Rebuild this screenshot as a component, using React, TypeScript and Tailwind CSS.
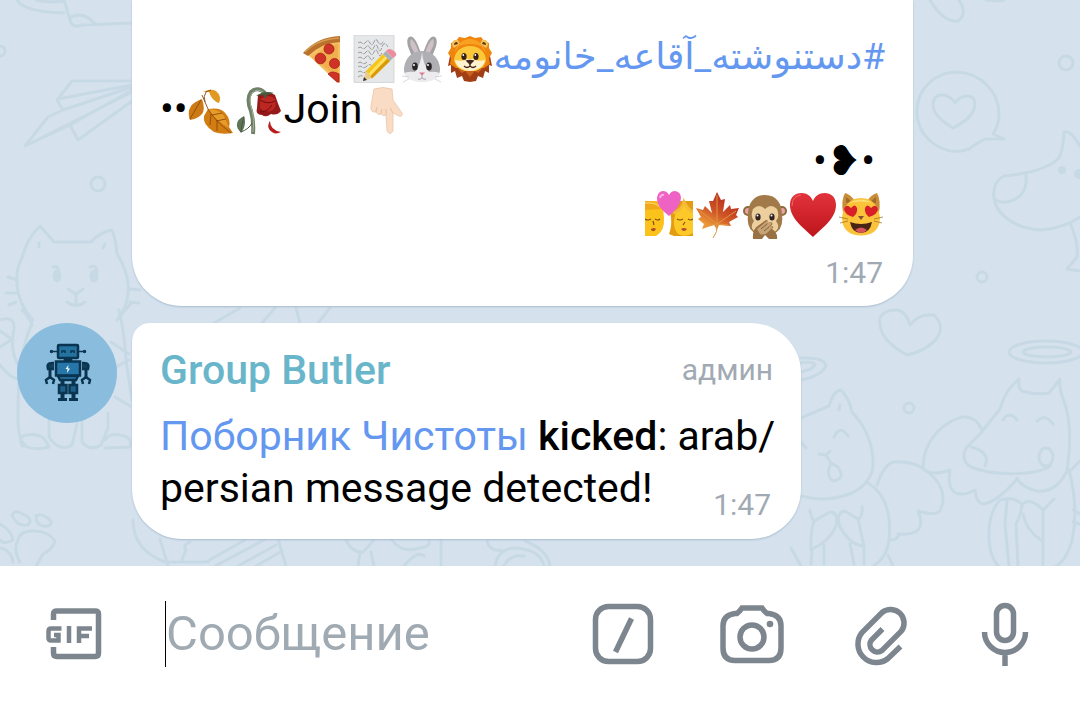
import type { ReactNode } from "react";

interface EmojiProps {
  label: string;
  children: ReactNode;
}

function Emoji({ label, children }: EmojiProps) {
  return (
    <svg
      role="img"
      aria-label={label}
      viewBox="0 0 48 48"
      className="h-12 w-12 shrink-0"
    >
      {children}
    </svg>
  );
}

const Pizza = () => (
  <Emoji label="pizza">
    <path d="M15 19Q28 7 48 5V48L45 47Z" fill="#f4c063" />
    <path d="M20 22Q32 12 46 9V43Z" fill="#f0b04e" />
    <path d="M11 18Q25 2 48 1V7Q29 8 16 21Z" fill="#b9712c" />
    <path d="M13 17Q26 4 47 3" fill="none" stroke="#d59a50" strokeWidth="1.5" />
    <g fill="#cf3226" stroke="#a92119" strokeWidth=".8">
      <circle cx="37" cy="14" r="5" />
      <circle cx="28.5" cy="23.5" r="5.3" />
      <circle cx="42.5" cy="28.5" r="5" />
      <path d="M36 39Q40 35 47 39V47L45 47Z" />
    </g>
  </Emoji>
);

const Memo = () => (
  <Emoji label="memo">
    <path d="M4 0H44V47.5H4Z" fill="#e6e7e8" stroke="#cfd1d3" strokeWidth=".8" />
    <path
      d="M8 8q2-2 4 0t4-1 4 1 4-1 4 0 6-1M8 13q2-2 4 0t4-1 4 1 4-1 4 1 4-1 6 0M8 18q2-2 4 0t4-1 4 1 4-1 4 1 4-1M8 23q2-2 4 0t4-1 4 1 4-1M8 28q2-2 4 0t5-1M8 32q2-2 4 0t5-1 5 0M8 37q2-2 4 0t5-1M8 42q2-2 5-1"
      fill="none"
      stroke="#84878b"
      strokeWidth=".8"
      strokeDasharray="5 1"
    />
    <path d="M13 46L16 36L22 43Z" fill="#eccb92" />
    <path d="M13 46L14 42L17 45Z" fill="#333" />
    <path d="M16 36L33 19L40 26L22 43.500Z" fill="#f5c518" />
    <path d="M18.500 38.500L35.500 21L37.500 23.500L20.500 41Z" fill="#ffe063" />
    <path d="M20.500 41L37.500 23.500L40 26L22 43.500Z" fill="#d99a0b" />
    <path d="M33 19L36 16L43 23L40 26Z" fill="#a9b0b6" />
    <path d="M36 16Q39 12 44 16Q49 20 43 23Z" fill="#ec8e9d" />
  </Emoji>
);

const Rabbit = () => (
  <Emoji label="rabbit face">
    <path d="M15 23Q6 6 11 2Q17-1 23 19ZM33 23Q42 6 37 2Q31-1 25 19Z" fill="#a3a2a7" />
    <path d="M17 19Q10 8 13 4Q18 7 21 19ZM31 19Q38 8 35 4Q30 7 27 19Z" fill="#cfc2c5" />
    <path d="M24 16C35 16 41 24 42 33C43 42 34 46.500 24 46.500S5 42 6 33C7 24 13 16 24 16Z" fill="#b0afb4" />
    <path d="M24 17Q23 29 17 37Q8 36 6 39Q11 47 24 47T42 39Q40 36 31 37Q25 29 24 17Z" fill="#ececee" />
    <ellipse cx="17" cy="31.500" rx="2.800" ry="4" fill="#292427" />
    <ellipse cx="31" cy="31.500" rx="2.800" ry="4" fill="#292427" />
    <circle cx="16" cy="30" r="1" fill="#fff" />
    <circle cx="30" cy="30" r="1" fill="#fff" />
    <path d="M21 37.500H27L24 40.500Z" fill="#df7891" />
    <path d="M24 40V43M20 44Q22 45 24 43Q26 45 28 44" fill="none" stroke="#aaa6ae" />
    <path d="M11 42L4 41M11 44L5 47M37 42L44 41M37 44L43 47" stroke="#c9c9cd" strokeWidth=".7" />
  </Emoji>
);

const Lion = () => (
  <Emoji label="lion face">
    <path d="M4 21L2 31L5 30L5 38L9 36L11 43L16 41L18 46L24 47L30 46L32 41L37 43L39 36L43 38L43 30L46 31L44 21Z" fill="#a23e16" />
    <path d="M24 1L29 3L35 2L38 6L43 8L43 13L46 18L43 23L44 29L38 33L10 33L4 29L5 23L2 18L5 13L5 8L10 6L13 2L19 3Z" fill="#ef850f" />
    <path d="M6 10Q6 4 12 5L14 9L8 13ZM42 10Q42 4 36 5L34 9L40 13Z" fill="#f2c15a" />
    <path d="M8 10Q8 7 11 7L12 9ZM40 10Q40 7 37 7L36 9Z" fill="#5c3412" />
    <path d="M8 18Q13 4 24 4T40 18L35 11Q24 7 13 11Z" fill="#f9a021" />
    <path d="M24 11C34 11 40 18 40 26Q37 34 30 36H18Q11 34 8 26C8 18 14 11 24 11Z" fill="#fcc738" />
    <path d="M9 25Q17 27 21 24H27Q31 27 39 25Q38 34 24 36Q10 34 9 25Z" fill="#fff2ce" />
    <ellipse cx="18" cy="21.500" rx="2.600" ry="3.500" fill="#35201a" />
    <ellipse cx="30" cy="21.500" rx="2.600" ry="3.500" fill="#35201a" />
    <circle cx="17.300" cy="20" r=".9" fill="#fff" />
    <circle cx="29.300" cy="20" r=".9" fill="#fff" />
    <path d="M19.500 25.500Q24 24 28.500 25.500L24 30Z" fill="#44261f" />
    <path d="M24 29V31M18 31Q21 34 24 31Q27 34 30 31" fill="none" stroke="#44261f" strokeWidth="1.300" />
    <path d="M11 33L16 38L19 36L24 42L29 36L32 38L37 33L30 36H18Z" fill="#c9601d" />
  </Emoji>
);

const FallenLeaf = () => (
  <Emoji label="fallen leaf">
    <path d="M15 5Q23 1 28 4Q34 9 31 16Q24 14 21 5" fill="#e09a22" />
    <path d="M14 12Q18 24 13 28Q9 32 2 33Q-1 25 3 19Q6 15 14 12Z" fill="#cd7a14" />
    <path d="M20 22Q33 20 38 27Q43 33 41 40L45 46Q34 48 26 45Q14 37 16 29Z" fill="#d17d12" />
    <path d="M20 22Q31 22 36 29L41 41Q28 34 20 22Z" fill="#e79c2a" />
    <path d="M13 13L2 32M14 8Q17 15 20 22Q27 34 43 46M17 15Q15 9 18 5L23 3M24 28L34 26M28 34L38 32M23 27L22 38M29 34L29 44" fill="none" stroke="#8d4a0c" strokeWidth=".9" />
  </Emoji>
);

const WiltedRose = () => (
  <Emoji label="wilted flower">
    <path d="M29 6Q22-1 15 5Q10 12 15 24Q18 34 17 47" fill="none" stroke="#6f8167" strokeWidth="4" />
    <path d="M27 5Q21 1 16 6Q12 12 16 23Q19 33 17 45" fill="none" stroke="#a4b09b" strokeWidth="1" />
    <path d="M8 29Q-2 34 2 42L5 46Q11 38 8 29Z" fill="#5e7558" />
    <path d="M8 30Q5 38 5 45Q13 42 16 36" fill="none" stroke="#465b41" />
    <path d="M22 8Q32 3 39 8Q42 17 45 24Q41 29 35 27Q30 31 26 28Q19 28 21 21Z" fill="#951919" />
    <path d="M24 12Q33 6 39 12Q41 20 37 23Q30 27 24 21Z" fill="#bc2722" />
    <path d="M24 13Q32 18 39 14M24 25Q32 25 36 18" fill="none" stroke="#6f0e10" />
    <path d="M20 9Q28 3 38 6L31 8L29 12L27 8Z" fill="#455a3c" />
    <path d="M34 34Q34 43 45 45Q38 49 33 42Q31 38 34 34Z" fill="#b81c1c" />
  </Emoji>
);

const PointDown = () => (
  <Emoji label="backhand index pointing down">
    <path d="M12 2Q21-1 30 2L31 13L40 26Q41 30 37 29L31 26V44Q28 49 25 44L24 28Q22 30 19 27Q16 29 14 25Q8 26 9 19Z" fill="#fadcc5" stroke="#e9c5aa" strokeWidth=".8" />
    <path d="M24 28V22M19 27Q19 24 20 22M14 25Q14 22 15 20M31 26L28 21" fill="none" stroke="#e5bfa2" strokeWidth="1" />
  </Emoji>
);

const Kiss = () => (
  <Emoji label="kiss">
    <path d="M0 10H12Q19 15 19 27Q20 40 11 45H0Z" fill="#fbc21b" />
    <path d="M0 10Q12 9 17 18L0 19Z" fill="#f0a91a" />
    <path d="M0 12Q10 11 15 16" stroke="#ffe17b" fill="none" />
    <path d="M28 10Q24 17 26 27Q27 35 24 43L29 45H48V10Z" fill="#e49c10" />
    <path d="M31 20Q36 18 39 12Q43 19 48 21V42Q40 47 33 43Q28 37 29 29Z" fill="#fdc928" />
    <path d="M28 22Q37 19 39 11Q43 19 48 21" fill="none" stroke="#f4bb36" strokeWidth="3" />
    <path d="M0 28Q3 30 6 28M10 28Q13 30 15 28M32 28Q35 30 38 28M43 28Q46 30 48 28M8 30L9 34M40 31L38 34" fill="none" stroke="#81500f" strokeWidth="1.200" />
    <path d="M6 38Q9 36 11 38Q9 42 6 39ZM36 38Q39 36 42 38Q39 42 36 38Z" fill="#b34c2d" />
    <path d="M24 25Q11 15 12 7Q13 0 18 0Q22 0 24 4Q26 0 30 0Q36 1 36 7Q36 15 24 25Z" fill="#ee62c3" />
    <path d="M15 7Q16 3 19 4" fill="none" stroke="#ffb1e7" strokeWidth="2" />
  </Emoji>
);

const MapleLeaf = () => (
  <Emoji label="maple leaf">
    <defs>
      <linearGradient id="maple" x1="0" y1="1" x2=".6" y2="0">
        <stop offset=".2" stopColor="#ed9b3a" />
        <stop offset=".55" stopColor="#cf5526" />
        <stop offset="1" stopColor="#b52a20" />
      </linearGradient>
    </defs>
    <path d="M24 1L28 9L32 8L30 21L37 14L38 18L46 17L43 24L45 26L36 31L38 35L26 34L24 39L21 34L9 38L11 33L5 28L8 26L3 17L10 19L12 15L19 22L16 10L20 10Z" fill="url(#maple)" />
    <path d="M24 4L24 34M24 33L6 19M24 33L43 20M24 33L12 35M24 33L35 34M24 33Q25 41 20 47" fill="none" stroke="#e2963f" strokeWidth="1" />
  </Emoji>
);

const Monkey = () => (
  <Emoji label="speak-no-evil monkey">
    <circle cx="7" cy="20" r="5" fill="#8d693e" />
    <circle cx="41" cy="20" r="5" fill="#8d693e" />
    <circle cx="7" cy="20" r="3" fill="#e9a5a4" />
    <circle cx="41" cy="20" r="3" fill="#e9a5a4" />
    <path d="M24 4C36 4 41 13 41 24Q43 39 32 43H16Q5 39 7 24C7 13 12 4 24 4Z" fill="#a27a49" />
    <path d="M24 18Q30 12 36 18Q39 26 35 30Q41 38 31 42H17Q7 38 13 30Q9 26 12 18Q18 12 24 18Z" fill="#edcf9e" />
    <ellipse cx="17" cy="26" rx="2.600" ry="3.600" fill="#302220" />
    <ellipse cx="31" cy="26" rx="2.600" ry="3.600" fill="#302220" />
    <circle cx="16.500" cy="24.500" r="1" fill="#fff" />
    <circle cx="30.500" cy="24.500" r="1" fill="#fff" />
    <path d="M12 48Q11 38 18 34L25 29Q28 29 26 32L30 31Q33 32 30 35Q34 35 31 38Q37 42 36 48H28L24 44L21 48Z" fill="#9a7142" />
    <path d="M16 38L26 30Q28 30 25 33L30 31Q32 33 27 36L31 35Q32 37 29 39Q24 45 19 43Z" fill="#c6a376" />
    <path d="M20 38L26 33M23 40L28 36" stroke="#82603b" />
  </Emoji>
);

const RedHeart = () => (
  <Emoji label="red heart">
    <defs>
      <linearGradient id="heart" x1="0" y1="0" x2="0" y2="1">
        <stop stopColor="#e2333b" />
        <stop offset="1" stopColor="#bd151b" />
      </linearGradient>
    </defs>
    <path d="M24 46C16 38 1 28 1 14C1 6 6 2 12.500 2C18 2 22 5 24 10C26 5 30 2 35.500 2C42 2 47 6 47 14C47 28 32 38 24 46Z" fill="url(#heart)" />
    <path d="M3 15Q3 5 12 4" fill="none" stroke="#f0686b" />
  </Emoji>
);

const HeartEyesCat = () => (
  <Emoji label="smiling cat with heart-eyes">
    <path d="M6 22Q4 9 8 2Q13 3 18 10H30Q35 3 40 2Q44 9 42 22Z" fill="#c98d37" />
    <path d="M9 12L9 6L15 11ZM39 12L39 6L33 11Z" fill="#a06a2c" />
    <path d="M24 7C36 7 42 16 43 27C43 39 35 44.500 24 44.500S5 39 5 27C6 16 12 7 24 7Z" fill="#fac33a" />
    <path d="M12 12Q24 5 36 12Q24 9 12 12Z" fill="#ffdf79" />
    <g fill="#d91f28">
      <path d="M16 26Q7 23 7 18Q9 12 14 17Q18 12 20 17Q21 22 16 26Z" />
      <path d="M32 26Q41 23 41 18Q39 12 34 17Q30 12 28 17Q27 22 32 26Z" />
    </g>
    <path d="M21 25H27L24 29Z" fill="#80513b" />
    <path d="M13 31Q24 35 35 31Q33 42 24 42T13 31Z" fill="#482417" />
    <path d="M18 39Q24 34 30 39Q27 42 24 42T18 39Z" fill="#d8555c" />
    <path d="M11 28L2 26M11 30L3 32M37 28L46 26M37 30L45 32" stroke="#976b29" strokeWidth=".7" />
  </Emoji>
);

function Doodles() {
  return (
    <svg
      aria-hidden="true"
      viewBox="0 0 1080 566"
      preserveAspectRatio="xMinYMin slice"
      className="absolute inset-0 -z-10 h-full w-full"
      fill="none"
      stroke="#c7d9e5"
      strokeWidth="3"
      strokeLinecap="round"
      strokeLinejoin="round"
    >
      {/* hat and paper plane */}
      <path d="M17 0Q24 12 64 13M36 0Q48 3 64 1M64 0L71 23Q74 28 82 25L132 23M71 17Q84 11 95 24" />
      <path d="M132 81H72L57 100L63 110L132 87M58 99L132 85M63 110L48 117L25 146L132 92M25 146L70 125L132 90M70 125L78 140L132 101" />
      <circle cx="0" cy="51" r="5" />
      <circle cx="98" cy="184" r="7" />
      {/* sitting cat */}
      <path d="M33 320C12 298 15 270 22 258Q27 238 40 226L54 242H91Q100 232 112 230Q116 240 117 254C130 274 134 300 117 320M33 320L22 310M117 320L132 302" />
      <path d="M39 243V247M105 244L103 248M8 277L17 280M6 293H16M9 305L16 302M130 289L140 290M130 302L139 303" />
      <path d="M68 289L76 294L83 289M76 294V305M67 302Q76 309 85 302" />
      <path d="M53 267Q58 265 59 272M90 267Q96 264 97 272" />
      <g fill="#c7d9e5">
        <ellipse cx="57" cy="276" rx="3" ry="5" />
        <ellipse cx="94" cy="276" rx="3" ry="5" />
      </g>
      <path d="M24 311L32 324Q18 352 18 410Q17 440 26 446M0 320Q15 315 14 329Q9 352 20 368M0 331L13 340M0 347L11 340M0 365Q10 378 18 379M119 310Q124 330 126 360L132 400M111 342L129 354M110 370L129 360M115 397L130 406" />
      <path d="M22 446Q18 437 26 435Q44 432 48 446M24 446Q35 451 49 447M49 421V437Q60 453 72 445L77 424V405M82 410V442Q90 452 101 445L108 428V413M105 440Q109 433 120 435Q133 437 130 447L105 448" />
      {/* paw print */}
      <path d="M18 540Q20 530 35 531Q48 531 55 541Q52 550 43 554L36 566M18 540Q13 550 20 562M12 515Q15 509 23 514Q34 519 28 525Q17 527 12 515ZM36 516Q42 512 51 521Q52 527 43 526Q36 525 36 516ZM0 524Q12 531 13 540Q4 545 0 540M0 548Q11 550 13 562" />
      {/* strip under the message */}
      <path d="M133 520Q133 550 165 562H190M160 539L168 566M206 562L245 540M215 566L264 540M238 566L276 545M256 566L282 551M278 539L286 566M181 562L186 550Q182 545 190 542M208 562H170M346 540Q352 553 363 552L374 540M392 540Q402 554 420 548Q431 547 429 540M360 553L358 566M371 552L374 566M404 566Q417 550 424 556M441 539V566M487 541Q490 552 501 550M495 566Q498 549 514 548Q540 549 544 566M504 566Q510 554 524 556M525 541Q548 550 550 566" />
      {/* between the two messages */}
      <path d="M214 323L240 308M262 323L275 308M296 308L300 323M318 323L330 308" />
      {/* speech bubble */}
      <path d="M930 0Q944 23 958 21Q968 14 959 0" />
      <path d="M985 139Q974 145 969 149C946 158 919 140 917 114C916 88 936 72 957 72C982 73 999 93 999 114Q999 125 993 134L1004 139Z" />
      <path d="M953 128Q933 116 933 105Q933 95 942 95Q950 95 955 103Q960 95 969 96Q977 98 974 109Q971 119 953 128Z" />
      <path d="M986 0Q996 2 1004 0" />
      <circle cx="1066" cy="63" r="7" />
      <circle cx="982" cy="277" r="5" />
      {/* dog head */}
      <path d="M1080 146Q1071 130 1064 132Q1063 151 1059 158C1047 170 1025 174 1004 176Q992 182 994 198C997 219 1023 230 1042 230Q1064 228 1080 217M1026 175Q1028 195 1011 201Q1002 204 996 200M1071 225Q1079 245 1077 257L1067 269L1080 271" />
      <g fill="#c7d9e5" stroke="none">
        <circle cx="1062" cy="170" r="4" />
        <circle cx="1079" cy="174" r="5" />
      </g>
      <path d="M907 355Q877 339 880 318Q884 309 898 310Q907 313 910 325Q919 313 934 315Q945 326 937 338Q928 350 907 355Z" />
      <circle cx="909" cy="408" r="5" />
      {/* angel cat */}
      <path d="M801 358Q825 357 826 366Q821 376 801 380M801 363Q813 361 815 365Q811 370 801 372M801 418L829 406Q834 390 841 390Q849 398 852 412C866 427 874 444 873 467Q870 484 852 493Q828 503 801 496M840 405L839 410M834 437Q840 424 848 436M801 442L806 448" />
      <path d="M819 454L826 455L830 451M826 455L831 463Q825 475 833 481Q846 479 838 467L831 463M868 483Q893 498 889 540Q887 558 873 566M877 485Q884 464 894 462Q911 461 922 468C942 480 947 497 940 511Q935 516 918 511Q924 524 917 531Q910 535 898 534Q899 540 890 540" />
      <path d="M810 510Q811 518 814 521L830 512Q839 512 836 526Q829 542 812 549L811 564M824 545V564M862 507Q863 517 858 519L845 511Q835 513 840 527Q851 546 864 546V564M850 544L854 564M814 521Q810 534 811 550M858 519L864 546M791 548L801 566M888 555L893 566" />
      {/* angel dog */}
      <ellipse cx="1046" cy="352" rx="37" ry="11" />
      <ellipse cx="1047" cy="352" rx="24" ry="5" />
      <path d="M1019 379Q1005 390 1000 409L980 434L966 448Q960 460 971 467C992 476 1036 476 1050 466M1019 379Q1018 389 1022 391Q1034 395 1049 393L1060 379Q1059 390 1064 401C1072 424 1070 448 1067 471Q1056 493 1037 491Q1021 487 1017 478M971 447Q991 452 985 466M1003 420Q1009 410 1017 420M1037 421Q1045 413 1053 424" />
      <ellipse cx="1046" cy="457" rx="7" ry="9" />
      <path d="M982 430Q976 416 963 417C944 421 923 440 923 468Q930 477 950 470Q947 485 954 492Q962 497 975 490Q976 503 984 504Q998 501 1017 479M1000 500C986 515 985 550 998 566M1000 500Q1016 496 1022 505Q1021 515 1016 524M1007 500L1005 524L1009 566M1016 524L1018 566M1022 505Q1029 496 1043 510L1054 499M1043 510V566M1023 514Q1026 530 1041 540M1069 470Q1079 508 1072 541Q1066 561 1056 566M1070 471L1080 461M1073 510L1080 514M1073 522L1080 524" />
    </svg>
  );
}

function Robot() {
  return (
    <svg
      role="img"
      aria-label="Group Butler"
      viewBox="0 0 100 100"
      className="h-[100px] w-[100px] shrink-0 rounded-full bg-[#8abddd]"
      fill="none"
      stroke="#0a3450"
      strokeWidth="2.500"
    >
      <path d="M33 28.500H40M62 28.500H69" strokeWidth="1.500" />
      <circle cx="34.500" cy="28.500" r=".5" />
      <circle cx="67.500" cy="28.500" r=".5" />
      <rect x="41" y="22" width="20" height="13" rx="1" fill="#2472a0" />
      <path d="M45 30V28H48V30M54 30V28H57V30" strokeWidth="1.500" />
      <path d="M48 35V38H54V35" fill="#0a3450" />
      <rect x="39" y="38.500" width="24" height="14" fill="#2676aa" />
      <path d="M41 53H61L59 57H43Z" fill="#2878a8" />
      <path d="M37 46H31Q29 40 35 40H37M65 46H71Q73 40 67 40H65" fill="#123f5c" />
      <path d="M33 46V55M69 46V55" strokeWidth="3" />
      <path d="M30 61L29 57L33 54L37 57L36 61M66 61L65 57L69 54L73 57L72 61" />
      <path d="M45.500 57V61M56.500 57V61M45.500 70V76M56.500 70V76" strokeWidth="4" />
      <rect x="42" y="62" width="7.500" height="8" fill="#1c608b" />
      <rect x="52.500" y="62" width="7.500" height="8" fill="#1c608b" />
      <path d="M41 76.500H50M52 76.500H61" strokeWidth="3" />
      <path d="M51.500 42L48.500 46H50.500L50 50L53 45.500H51Z" fill="#fff" stroke="none" />
    </svg>
  );
}

function SentAt() {
  return (
    <time className="text-[30px] leading-[36px] text-[#a1aab3]">1:47</time>
  );
}

function Chat() {
  return (
    <main className="relative isolate grow overflow-hidden bg-[#d5e2ee] px-[17px] pb-[27px]">
      <Doodles />
      <div className="flex flex-col gap-[17px]">
        <article className="ml-[115px] flex max-w-[781px] flex-col rounded-b-[50px] bg-white px-[28px] pt-[31px] pb-[15px] text-[41px] leading-[52px] shadow-[0_1px_2px_#a9bccd]">
          {/* hashtag line */}
          <p dir="rtl" className="flex h-[52px] items-end">
            <a
              href="#tag"
              className="font-['Roboto','DejaVu_Sans',sans-serif] text-[37px] text-[#6497f0]"
            >
              #دستنوشته_آقاعه_خانومه
            </a>
            <Lion />
            <Rabbit />
            <Memo />
            <span className="w-[10px]" />
            <Pizza />
          </p>
          <p className="flex h-[52px] items-end">
            <span>••</span>
            <FallenLeaf />
            <WiltedRose />
            <span>Join</span>
            <PointDown />
          </p>
          <p className="h-[52px] pr-[10px] text-right font-['Roboto','DejaVu_Sans',sans-serif]">
            •❥•
          </p>
          <p dir="rtl" className="flex h-[52px] items-end">
            <HeartEyesCat />
            <RedHeart />
            <Monkey />
            <MapleLeaf />
            <Kiss />
          </p>
          <div className="mt-[16px] flex justify-end pr-[2px]">
            <SentAt />
          </div>
        </article>

        <div className="flex items-start gap-[15px]">
          <Robot />
          <article className="w-full max-w-[669px] rounded-[50px] rounded-tl-[18px] bg-white pt-[21px] pr-[24px] pb-[25px] pl-[28px] text-[41px] leading-[52px] shadow-[0_1px_2px_#a9bccd]">
            <header className="mb-[14px] flex items-center justify-between pr-[4px]">
              <h2 className="font-medium text-[#69b6cb]">Group Butler</h2>
              <span className="text-[30px] text-[#a1aab3]">админ</span>
            </header>
            <p>
              <a href="#user" className="text-[#6497f0]">
                Поборник Чистоты
              </a>{" "}
              <b className="font-medium">kicked</b>: arab/
              <wbr />
              persian message detected!
              <span className="float-right mt-[25px] flex h-[20px] pr-[6px]">
                <SentAt />
              </span>
            </p>
          </article>
        </div>
      </div>
    </main>
  );
}

const iconButton = "h-[64px] w-[64px] shrink-0";

function Composer() {
  return (
    <form
      className="flex h-[135px] shrink-0 items-center bg-white pr-[38px] pl-[42px]"
      onSubmit={(e) => e.preventDefault()}
    >
      <button type="button" aria-label="GIF" className={iconButton}>
        <svg viewBox="0 0 64 64" fill="none" stroke="#7d868e" strokeWidth="5.500">
          <path d="M11.500 18V12Q11.500 9 15 9H53Q56.500 9 56.500 12V51Q56.500 54.500 53 54.500H15Q11.500 54.500 11.500 51V45" />
          <path d="M19.500 26.500H9Q6.500 26.500 6.500 29V36Q6.500 38.500 9 38.500H16.500V33H12M27 24V41M50 26.500H37V41M37 34H47" strokeWidth="4.500" />
        </svg>
      </button>
      <input
        aria-label="Сообщение"
        placeholder="Сообщение"
        className="ml-[59px] h-[66px] min-w-0 grow border-l border-black text-[49px] outline-none placeholder:text-[#a0aab2]"
      />
      <div className="flex gap-[65px]">
        <button type="button" aria-label="Commands" className={iconButton}>
          <svg viewBox="0 0 64 64" fill="none" stroke="#7d868e" strokeWidth="5.500">
            <rect x="4.500" y="4.500" width="55" height="55" rx="13" />
            <path d="M40.500 16.500L24.500 50" />
          </svg>
        </button>
        <button type="button" aria-label="Camera" className={iconButton}>
          <svg viewBox="0 0 64 64" fill="none" stroke="#7d868e" strokeWidth="5.500">
            <path d="M22 6H42Q44 9 47 11.500H49Q61 13 61 24V46Q61 58.500 49 58.500H15Q3 58.500 3 46V24Q3 13 15 11.500H17Q20 9 22 6Z" />
            <circle cx="32" cy="35" r="12" />
            <circle cx="50" cy="22" r="3.300" fill="#7d868e" stroke="none" />
          </svg>
        </button>
        <button type="button" aria-label="Attach file" className={iconButton}>
          <svg viewBox="0 0 64 64" fill="none" stroke="#7d868e" strokeWidth="5.500">
            <path d="M33.500 27L22.500 38A7.500 7.500 0 0 0 33 48.500L52 29.500A13.500 13.500 0 0 0 33 10.500L13 30.500A18.500 18.500 0 0 0 39 56.500L51.500 44.500" />
          </svg>
        </button>
        <button type="button" aria-label="Voice message" className={iconButton}>
          <svg viewBox="0 0 64 64" fill="none" stroke="#7d868e" strokeWidth="5.500">
            <rect x="18.500" y="3.500" width="17" height="35" rx="8.500" />
            <path d="M6.500 30A20.500 20.500 0 0 0 47.500 30M27 50V64" />
          </svg>
        </button>
      </div>
    </form>
  );
}

export default function App() {
  return (
    <div className="flex min-h-screen flex-col font-['Roboto',sans-serif] text-black">
      <Chat />
      <Composer />
    </div>
  );
}
